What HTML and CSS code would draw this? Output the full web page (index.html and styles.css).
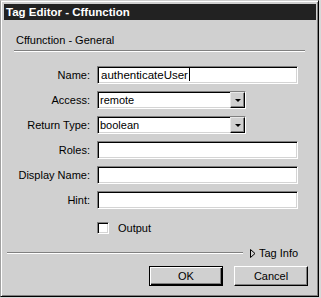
FILE: index.html
```html
<!DOCTYPE html>
<html lang="en">
<head>
    <meta charset="UTF-8">
    <title>Tag Editor - Cffunction</title>
    <link rel="stylesheet" href="styles.css">
</head>
<body>
    <div class="window">
        <div class="titlebar">Tag Editor - Cffunction</div>

        <div class="section-title">Cffunction - General</div>
        <div class="rule top-rule"></div>

        <!-- Form fields -->
        <div class="form">
            <div class="row">
                <label class="label">Name:</label>
                <div class="field text name">authenticateUser<span class="caret"></span></div>
            </div>
            <div class="row">
                <label class="label">Access:</label>
                <div class="field select">
                    <span class="value">remote</span>
                    <span class="arrow"><span class="tri"></span></span>
                </div>
            </div>
            <div class="row">
                <label class="label">Return Type:</label>
                <div class="field select">
                    <span class="value">boolean</span>
                    <span class="arrow"><span class="tri"></span></span>
                </div>
            </div>
            <div class="row">
                <label class="label">Roles:</label>
                <div class="field text"></div>
            </div>
            <div class="row">
                <label class="label">Display Name:</label>
                <div class="field text"></div>
            </div>
            <div class="row">
                <label class="label">Hint:</label>
                <div class="field text"></div>
            </div>
            <div class="row check-row">
                <span class="checkbox"></span>
                <span class="check-label">Output</span>
            </div>
        </div>

        <!-- Bottom area -->
        <div class="footer-line">
            <div class="rule bottom-rule"></div>
            <span class="tag-info">
                <svg class="open-tri" width="6" height="9" viewBox="0 0 6 9">
                    <path d="M0.5 0.5 L0.5 8.5 L5 4.5 Z" fill="none" stroke="#000" stroke-width="1"/>
                </svg>
                Tag Info
            </span>
        </div>
        <div class="buttons">
            <div class="btn default"><span>OK</span></div>
            <div class="btn"><span>Cancel</span></div>
        </div>
    </div>
</body>
</html>
```

FILE: styles.css
```css
/* Page */
body {
    margin: 0;
    background-color: #d8d8d8;
    font-family: 'Liberation Sans', Arial, sans-serif;
    font-size: 11px;
    color: #000;
}

/* Window frame */
.window {
    width: 319px;
    height: 297px;
    box-sizing: border-box;
    background-color: #d0d0d0;
    border-top: 1px solid #d0d0d0;
    border-left: 1px solid #a0a0a0;
    border-right: 1px solid #000;
    border-bottom: 1px solid #000;
    box-shadow: inset 1px 1px #ffffff, inset -1px -1px #808080;
}

.titlebar {
    margin: 3px 2px 0 3px;
    height: 16px;
    line-height: 16px;
    padding-left: 2px;
    background-color: #222222;
    color: #ffffff;
    font-weight: bold;
    font-size: 11.5px;
}

.section-title {
    margin: 14px 0 0 15px;
    height: 13px;
    line-height: 13px;
}

/* Etched lines */
.rule {
    height: 0;
    border-top: 1px solid #808080;
    border-bottom: 1px solid #ffffff;
}

.top-rule {
    margin: 3px 13px 0 13px;
}

/* Form */
.form {
    margin-top: 14px;
    display: flex;
    flex-direction: column;
    gap: 7px;
}

.row {
    display: flex;
    align-items: center;
    height: 18px;
}

.label {
    width: 89px;
    text-align: right;
    flex: none;
}

.field {
    box-sizing: border-box;
    height: 18px;
    margin-left: 7px;
    background-color: #ffffff;
    border-top: 1px solid #808080;
    border-left: 1px solid #808080;
    border-right: 1px solid #ffffff;
    border-bottom: 1px solid #ffffff;
    box-shadow: inset 1px 1px #000000, inset -1px -1px #d4d4d4;
    line-height: 16px;
    padding-left: 3px;
}

.text {
    width: 201px;
}

.name {
    font-size: 11.5px;
}

.caret {
    display: inline-block;
    width: 1px;
    height: 13px;
    background-color: #000;
    vertical-align: -2px;
    margin-left: 1px;
}

.select {
    width: 149px;
    display: flex;
    justify-content: space-between;
    padding-left: 2px;
    padding-right: 0;
}

.arrow {
    width: 15px;
    height: 16px;
    box-sizing: border-box;
    background-color: #d0d0d0;
    border-top: 1px solid #e8e8e8;
    border-left: 1px solid #e8e8e8;
    border-right: 1px solid #000;
    border-bottom: 1px solid #000;
    box-shadow: inset -1px -1px #808080;
    display: flex;
    align-items: center;
    justify-content: center;
}

.tri {
    width: 0;
    height: 0;
    border-left: 3px solid transparent;
    border-right: 3px solid transparent;
    border-top: 3px solid #000;
    margin-top: 1px;
}

/* Checkbox */
.check-row {
    margin-top: 3px;
    padding-left: 96px;
}

.checkbox {
    width: 12px;
    height: 12px;
    box-sizing: border-box;
    background-color: #fff;
    border-top: 1px solid #808080;
    border-left: 1px solid #808080;
    border-right: 1px solid #ffffff;
    border-bottom: 1px solid #ffffff;
    box-shadow: inset 1px 1px #000000, inset -1px -1px #d4d4d4;
}

.check-label {
    margin-left: 9px;
}

/* Footer */
.footer-line {
    margin-top: 10px;
    display: flex;
    align-items: center;
    padding-left: 6px;
}

.bottom-rule {
    width: 236px;
}

.tag-info {
    margin-left: 7px;
    display: flex;
    align-items: center;
    gap: 3px;
}

.open-tri {
    display: block;
}

.buttons {
    display: flex;
    justify-content: flex-end;
    gap: 11px;
    margin-top: 7px;
    padding-right: 10px;
}

.btn {
    width: 74px;
    height: 20px;
    box-sizing: border-box;
    background-color: #d0d0d0;
    border-top: 1px solid #ffffff;
    border-left: 1px solid #ffffff;
    border-right: 1px solid #000000;
    border-bottom: 1px solid #000000;
    box-shadow: inset -1px -1px #808080;
    display: flex;
    align-items: center;
    justify-content: center;
}

.btn.default {
    border: 1px solid #000;
    box-shadow: inset 1px 1px #ffffff, inset -1px -1px #000000, inset -2px -2px #808080;
}
```
